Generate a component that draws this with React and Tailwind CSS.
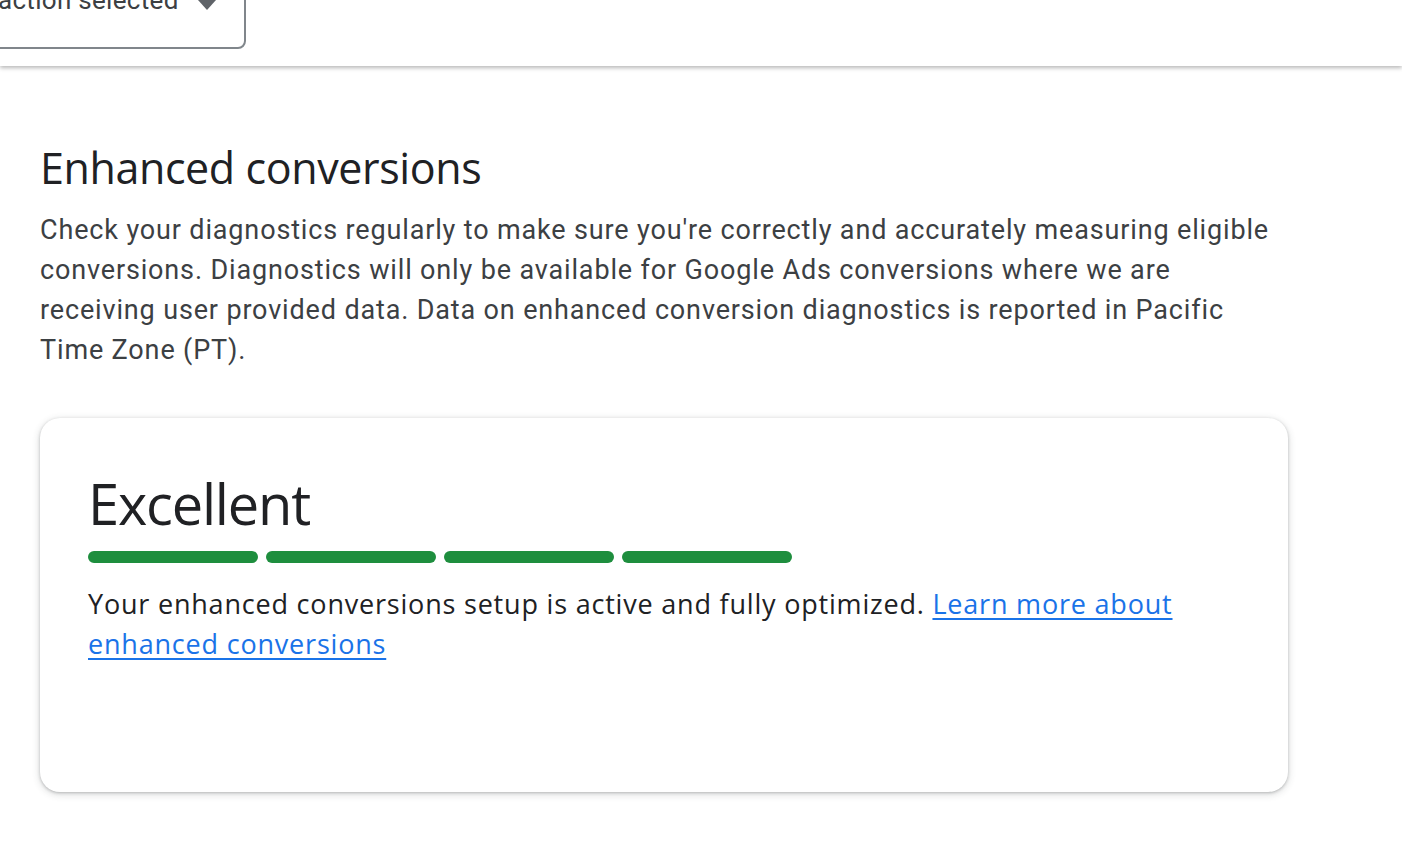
import React from "react";

const Bars = () => (
  <div className="flex gap-2 mt-4">
    {[0, 1, 2, 3].map((i) => (
      <div key={i} className="w-[170px] h-3 rounded-full bg-[#1e8e3e]" />
    ))}
  </div>
);

const App = () => {
  return (
    <div className="min-h-[846px] bg-white font-['Roboto',sans-serif] overflow-hidden">
      {/* Top bar with cut-off dropdown */}
      <div className="h-[66px] bg-white shadow-[0_2px_4px_rgba(0,0,0,0.28)] relative">
        <div className="absolute left-[-60px] top-[-40px] w-[306px] h-[89px] border-2 border-[#80868b] rounded-lg flex items-start">
          <span className="mt-[22px] ml-[56px] text-[26px] leading-[32px] tracking-[0.3px] text-[#3c4043]">
            action selected
          </span>
          <svg className="absolute left-[254px] top-[38px]" width="22" height="12" viewBox="0 0 22 12">
            <path d="M2 0h18l-9 10z" fill="#5f6368" />
          </svg>
        </div>
      </div>

      <div className="px-10 pt-[76px]">
        <h1 className="font-['Open_Sans',sans-serif] text-[43px] leading-[52px] text-[#202124] tracking-[-0.4px]">
          Enhanced conversions
        </h1>
        <p className="mt-4 w-[1240px] text-[27px] leading-[40px] tracking-[0.85px] text-[#3c4043]">
          Check your diagnostics regularly to make sure you're correctly and accurately measuring eligible
          conversions. Diagnostics will only be available for Google Ads conversions where we are
          receiving user provided data. Data on enhanced conversion diagnostics is reported in Pacific
          Time Zone (PT).
        </p>

        {/* Status card */}
        <div className="mt-[48px] w-[1248px] h-[374px] rounded-[20px] bg-white shadow-[0_1px_3px_rgba(60,64,67,0.3),0_2px_6px_2px_rgba(60,64,67,0.12)] px-12 pt-[53px]">
          <div className="font-['Open_Sans',sans-serif] text-[56px] leading-[64px] text-[#202124] tracking-[-1.2px]">
            Excellent
          </div>
          <Bars />
          <p className="mt-[21px] w-[1120px] font-['Open_Sans',sans-serif] text-[27px] leading-[40px] text-[#202124] tracking-[0.8px]">
            Your enhanced conversions setup is active and fully optimized.{" "}
            <a href="#" className="text-[#1a73e8] underline underline-offset-[4px] decoration-[2px]">
              Learn more about enhanced conversions
            </a>
          </p>
        </div>
      </div>
    </div>
  );
};

export default App;
